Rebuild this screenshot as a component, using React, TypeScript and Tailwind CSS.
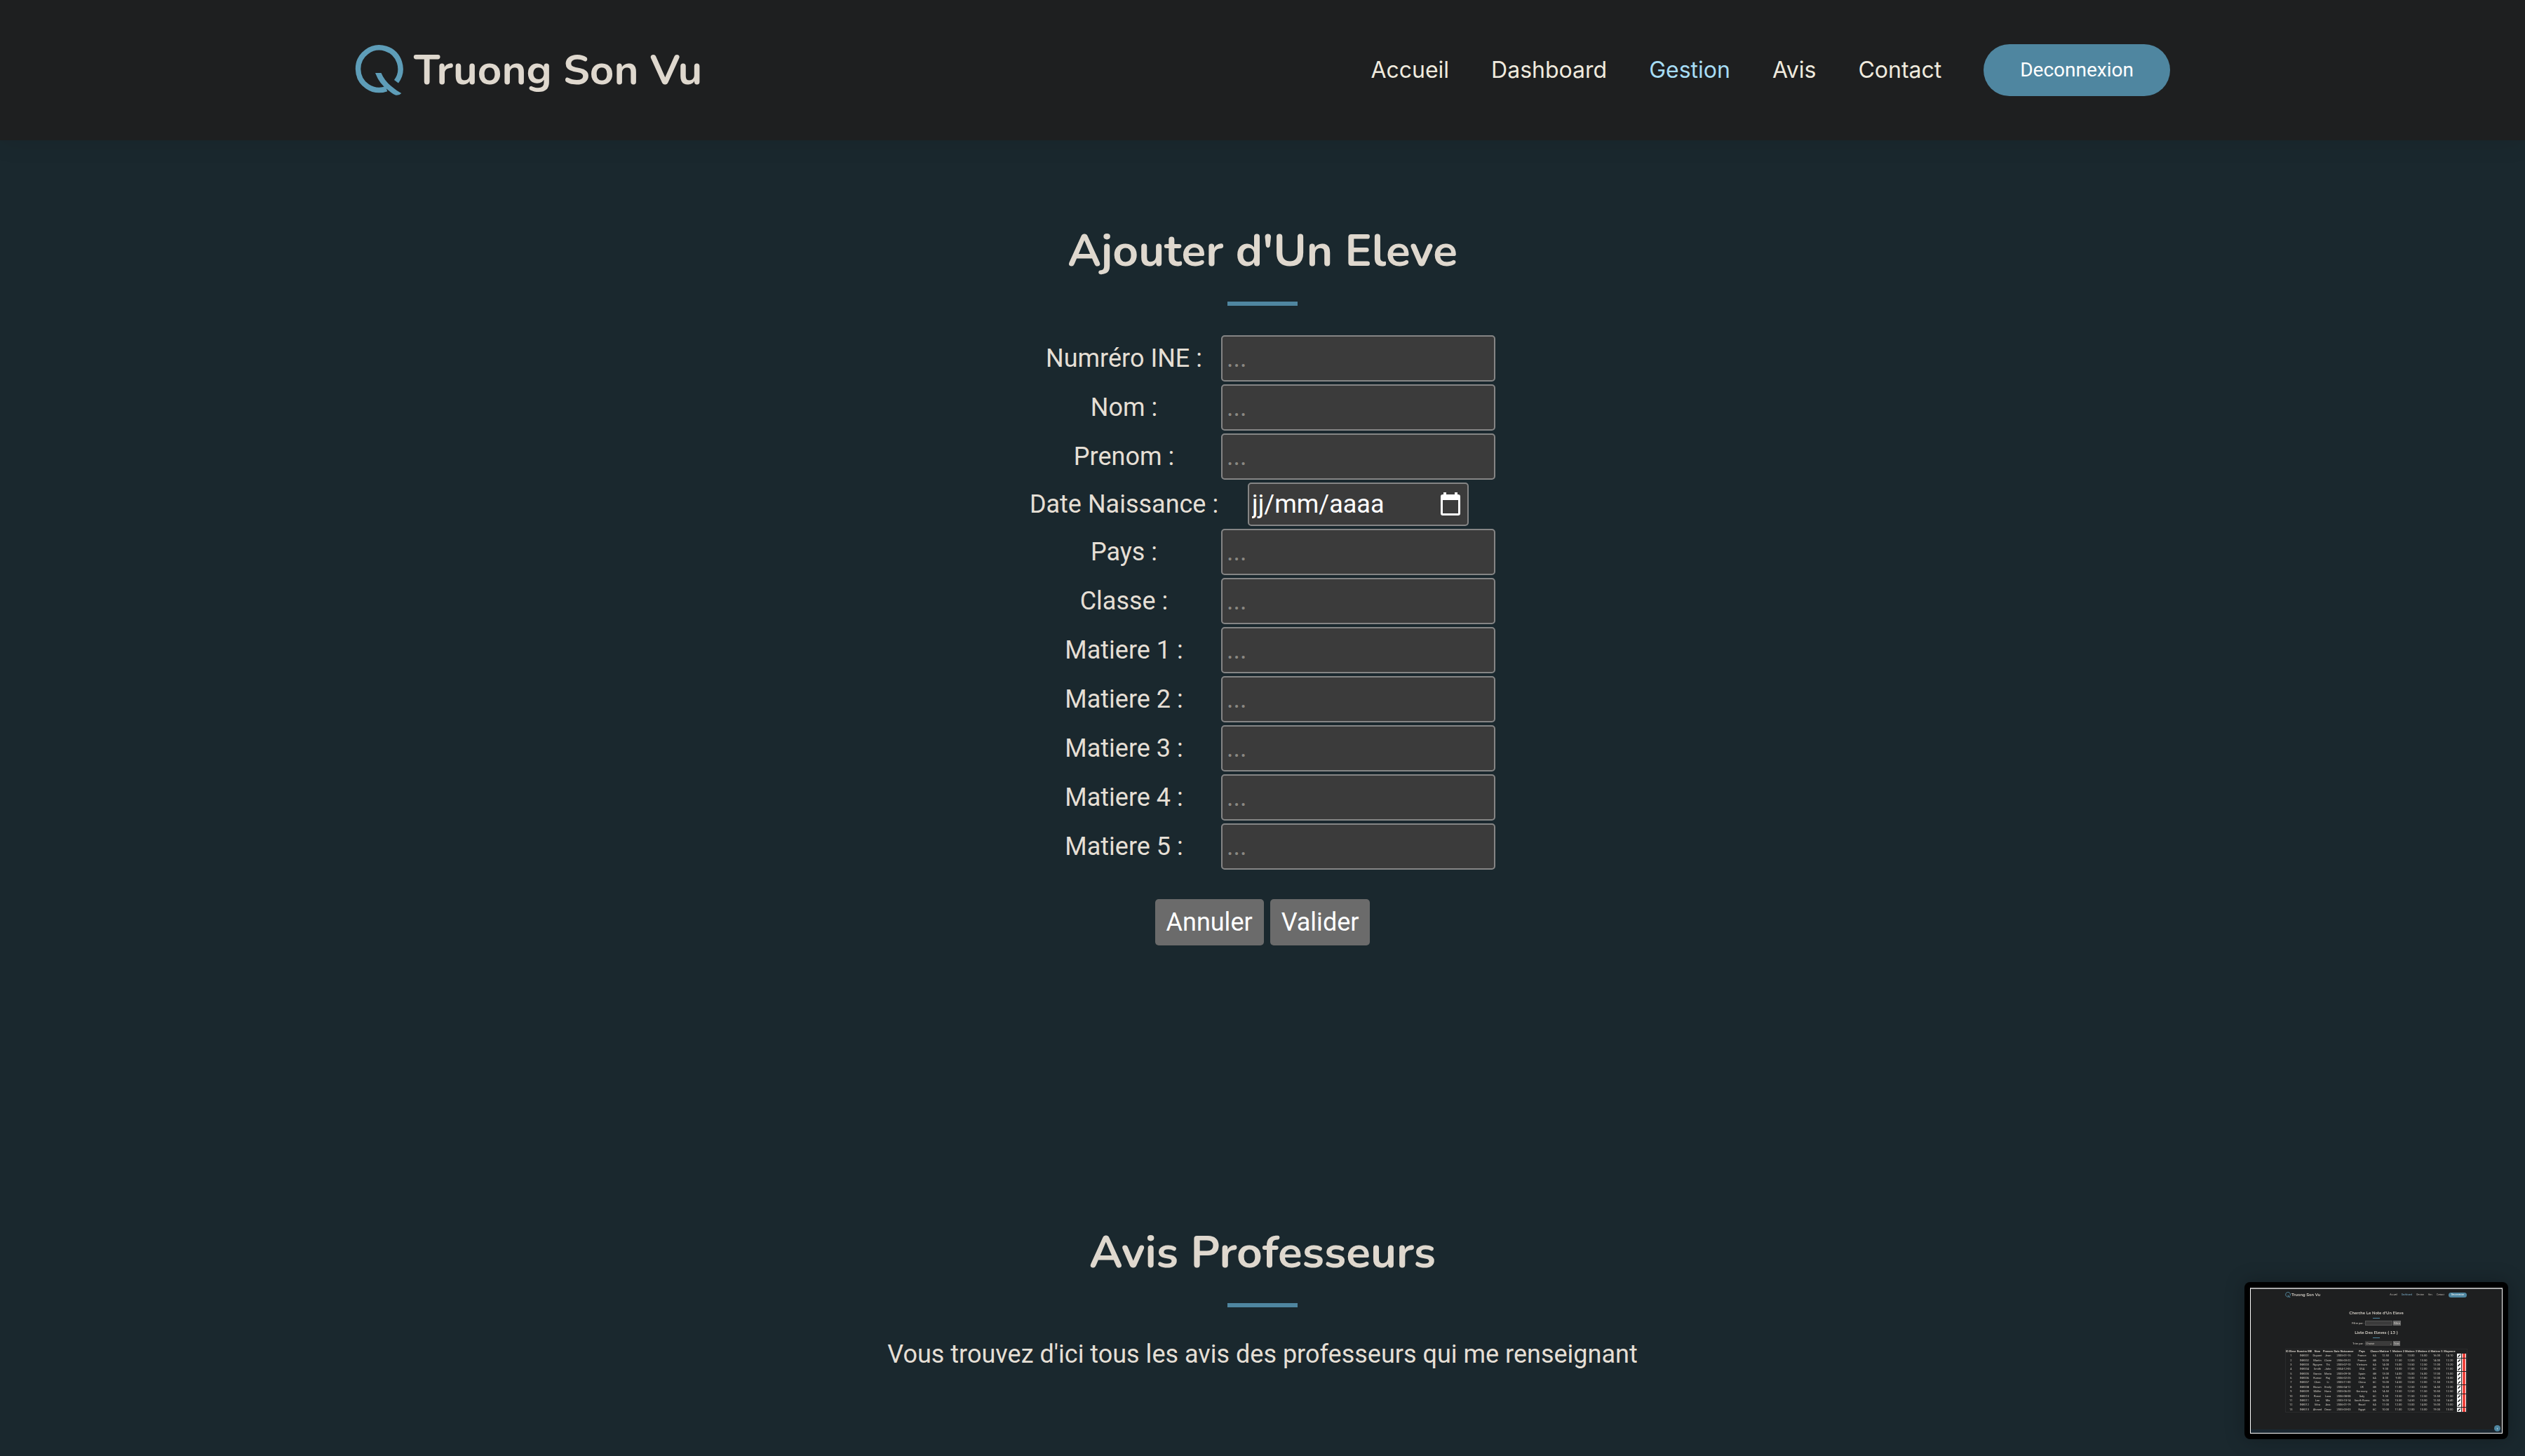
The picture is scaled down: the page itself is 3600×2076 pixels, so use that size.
import { useId } from "react";

const navLinks = ["Accueil", "Dashboard", "Gestion", "Avis", "Contact"];

const fields = [
  "Numréro INE",
  "Nom",
  "Prenom",
  "Date Naissance",
  "Pays",
  "Classe",
  "Matiere 1",
  "Matiere 2",
  "Matiere 3",
  "Matiere 4",
  "Matiere 5",
];

const previewHead = ["ID Eleve", "Numéro INE", "Nom", "Prenom", "Date Naissance", "Pays", "Classe", "Matiere 1", "Matiere 2", "Matiere 3", "Matiere 4", "Matiere 5", "Moyenne"];
const previewCols = [15, 24, 13, 17, 28, 24, 12, 19, 18, 18, 18, 19, 18];

const previewRows = [
  ["1", "INE001", "Dupont", "Jean", "2005-01-15", "France", "6A", "12.50", "14.00", "13.00", "15.00", "16.00", "14.10"],
  ["2", "INE002", "Martin", "Claire", "2006-03-22", "France", "6B", "10.00", "11.50", "12.00", "13.50", "14.00", "12.20"],
  ["3", "INE003", "Nguyen", "Thi", "2005-07-10", "Vietnam", "6A", "14.00", "15.00", "13.50", "12.50", "11.00", "13.20"],
  ["4", "INE004", "Smith", "John", "2004-12-05", "USA", "6C", "9.00", "10.00", "11.00", "12.00", "13.00", "11.00"],
  ["5", "INE005", "Garcia", "Maria", "2005-09-18", "Spain", "6B", "13.00", "14.00", "15.00", "16.00", "17.00", "15.00"],
  ["6", "INE006", "Kumar", "Raj", "2006-02-25", "India", "6A", "8.00", "9.00", "10.00", "11.00", "12.00", "10.00"],
  ["7", "INE007", "Chen", "Li", "2005-11-30", "China", "6C", "15.00", "14.50", "13.50", "12.00", "11.50", "13.30"],
  ["8", "INE008", "Brown", "Emily", "2006-04-12", "UK", "6B", "10.50", "11.00", "12.50", "13.00", "14.50", "12.30"],
  ["9", "INE009", "Müller", "Hans", "2005-06-20", "Germany", "6A", "14.50", "13.50", "12.50", "11.50", "10.50", "12.50"],
  ["10", "INE010", "Rossi", "Luca", "2006-08-08", "Italy", "6C", "9.50", "10.50", "11.50", "12.50", "13.50", "11.50"],
  ["11", "INE011", "Lee", "Min", "2005-10-14", "South Korea", "6B", "16.00", "15.50", "14.50", "13.50", "12.50", "14.40"],
  ["12", "INE012", "Silva", "Ana", "2006-01-19", "Brazil", "6A", "11.00", "12.00", "13.00", "14.00", "15.00", "13.00"],
  ["13", "INE013", "Ahmed", "Omar", "2005-03-03", "Egypt", "6C", "10.00", "11.00", "12.00", "13.00", "19.00", "13.00"],
];

function Logo({ className }: { className: string }) {
  return (
    <svg viewBox="-3 0 72 72" className={className} fill="none" aria-hidden="true">
      <path d="M58 52.200A30.200 30.200 0 1 0 44 62.600" stroke="#5e9db8" strokeWidth="7.500" />
      <path d="M28 40H36.500Q41 51 51 59Q58 65 65.300 69Q62.500 72.300 57.500 71.800Q54 71 47 65Q34 56 28 40Z" fill="#5e9db8" />
    </svg>
  );
}

function SectionTitle({ children }: { children: string }) {
  return (
    <>
      <h2 className="text-center font-[Nunito,Lato,sans-serif] text-[64px] leading-[76px] font-bold text-[#dfd8ce]">{children}</h2>
      <div className="mx-auto mt-[34px] h-[6px] w-[100px] bg-[#4f86a0]" />
    </>
  );
}

function Field({ label }: { label: string }) {
  const id = useId();
  const isDate = label === "Date Naissance";
  return (
    <tr>
      <td className="h-[62px] p-0 text-center">
        <label htmlFor={id}>{label} :</label>
      </td>
      <td className="p-0">
        {isDate ? (
          <div className="mx-auto flex h-[62px] w-[315px] items-center justify-between rounded-[5px] border-2 border-[#858585] bg-[#3b3b3b] pr-2 pl-1">
            <input id={id} type="text" placeholder="jj/mm/aaaa" className="w-[240px] bg-transparent text-white outline-none placeholder:text-white placeholder:opacity-100" />
            <button type="button" aria-label="Choisir une date">
              <svg viewBox="0 0 32 36" className="h-[36px] w-[32px]" aria-hidden="true">
                <path fillRule="evenodd" fill="#fff" d="M6 1h4v3h12V1h4v3h1q3 0 3 3v24q0 3-3 3H5q-3 0-3-3V7q0-3 3-3h1ZM5 12v19h22V12Z" />
              </svg>
            </button>
          </div>
        ) : (
          <input id={id} type="text" placeholder="..." className="block h-[66px] w-[391px] rounded-[5px] border-2 border-[#858585] bg-[#3b3b3b] px-[6px] text-white outline-none placeholder:text-[#8a8882]" />
        )}
      </td>
    </tr>
  );
}

function Preview() {
  return (
    <aside aria-label="Aperçu" className="fixed right-6 bottom-6 rounded-lg bg-black p-2 shadow-[0_0_28px_rgba(0,0,0,0.25)]">
      <div className="flex h-[208px] w-[360px] flex-col border border-t-2 border-white border-t-[#aaa] bg-[#1e1f20] font-[Roboto,sans-serif] text-[#cfcac2]">
        <div className="flex h-[16px] shrink-0 items-center justify-between pr-[50px] pl-[49px]">
          <div className="flex items-center gap-px font-[Nunito,Lato,sans-serif] text-[6px] font-bold">
            <Logo className="h-[8px] w-[8px]" />
            <span>Truong Son Vu</span>
          </div>
          <div className="flex items-center gap-[6px] font-[Inter,sans-serif] text-[3px] leading-[7px]">
            {navLinks.map((link) => (
              <span key={link} className={link === "Dashboard" ? "text-[#7fb4d0]" : ""}>{link}</span>
            ))}
            <span className="flex h-[7px] w-[26px] items-center justify-center rounded-full bg-[#4f86a0] text-white">Deconnexion</span>
          </div>
        </div>
        <div className="mt-[13px] flex flex-col items-center text-[4px] leading-[7px]">
          <div className="font-[Nunito,Lato,sans-serif] text-[6px] leading-[10px] font-bold">Cherche Le Note d'Un Eleve</div>
          <div className="mt-[2px] h-px w-[10px] bg-[#4f86a0]" />
          <div className="mt-[3px] flex items-center gap-px">
            <span>Filtre par :</span>
            <span className="h-[7px] w-[39px] border border-[#555] bg-[#3b3b3b]" />
            <span className="h-[7px] w-[11px] bg-[#6b6b6b] text-center">Filtre</span>
          </div>
          <div className="mt-[5px] font-[Nunito,Lato,sans-serif] text-[6px] leading-[10px] font-bold">Liste Des Eleves ( 13 )</div>
          <div className="mt-[2px] h-px w-[10px] bg-[#4f86a0]" />
          <div className="mt-1 flex items-center gap-px">
            <span>Trier par :</span>
            <span className="flex h-[7px] w-[39px] items-center justify-between bg-[#3b3b3b] px-px"><span>Choisir</span><span>⌄</span></span>
            <span className="h-[7px] w-[10px] bg-[#6b6b6b] text-center">Trier</span>
          </div>
        </div>
        <div className="mt-1 flex justify-center">
          <table className="h-[91px] w-[260px] table-fixed border-collapse border border-[#2a2b2c] text-center text-[4px] leading-[6px]">
            <colgroup>
              {previewCols.map((w, i) => (
                <col key={i} style={{ width: w }} />
              ))}
              <col />
            </colgroup>
            <thead>
              <tr>
                {previewHead.map((h) => (
                  <th key={h} className="p-0 whitespace-nowrap">{h}</th>
                ))}
                <th className="p-0" />
              </tr>
            </thead>
            <tbody>
              {previewRows.map((row) => (
                <tr key={row[0]}>
                  {row.map((cell, i) => (
                    <td key={i} className="p-0 whitespace-nowrap">{cell}</td>
                  ))}
                  <td className="p-0">
                    <svg viewBox="0 0 13 6" className="mx-auto block h-[6px] w-[13px]" aria-hidden="true">
                      <path d="M0 0H6V6H0Z" fill="#fff" />
                      <path d="M1.500 4.700L4.700 1.500" stroke="#111" strokeWidth="1.300" />
                      <path d="M7 0H13V6H7Z" fill="#fff" />
                      <path d="M8 0H12V6H8Z" fill="#f0443e" />
                    </svg>
                  </td>
                </tr>
              ))}
            </tbody>
          </table>
        </div>
        <div className="mt-auto flex h-[5px] items-end justify-end bg-[#1a2730] pr-[2px] pb-[2px]">
          <span className="flex h-[9px] w-[9px] shrink-0 items-center justify-center rounded-full bg-[#4f86a0] text-[5px] text-white">↑</span>
        </div>
      </div>
    </aside>
  );
}

export default function App() {
  return (
    <div className="min-h-screen bg-[#1a282e] font-[Roboto,sans-serif] text-[36px] leading-[54px] text-[#e5dfd5]">
      <header className="bg-[#1e1f20] shadow-[0_0_36px_rgba(0,0,0,0.1)]">
        <div className="mx-auto flex h-[200px] max-w-[2592px] items-center justify-between pr-[2px]">
          <a href="#accueil" className="flex items-center gap-[14px]">
            <Logo className="h-[72px] w-[72px]" />
            <span className="font-[Nunito,Lato,sans-serif] text-[60px] leading-[72px] font-bold text-[#dfd8ce]">Truong Son Vu</span>
          </a>
          <div className="flex items-center gap-[60px] font-[Inter,sans-serif] text-[32px] leading-[48px]">
            <nav className="flex gap-[60px]">
              {navLinks.map((link) => (
                <a key={link} href={"#" + link.toLowerCase()} className={link === "Gestion" ? "text-[#a6dcf4]" : "text-[#efeade]"}>
                  {link}
                </a>
              ))}
            </nav>
            <button type="button" className="h-[74px] rounded-full bg-[#4f86a0] px-[52px] font-[Roboto,sans-serif] text-[28px] text-white">Deconnexion</button>
          </div>
        </div>
      </header>
      <main>
        <section className="pt-[120px]">
          <SectionTitle>Ajouter d'Un Eleve</SectionTitle>
          <form className="mt-[38px] flex flex-col items-center">
            <table className="border-separate border-spacing-1">
              <tbody>
                {fields.map((f) => (
                  <Field key={f} label={f} />
                ))}
              </tbody>
            </table>
            <div className="mt-[38px] flex gap-[9px] text-white">
              <button type="reset" className="h-[66px] rounded-[5px] bg-[#6b6b6b] px-4">Annuler</button>
              <button type="button" className="h-[66px] rounded-[5px] bg-[#6b6b6b] px-4">Valider</button>
            </div>
          </form>
        </section>
        <section className="pt-[400px]">
          <SectionTitle>Avis Professeurs</SectionTitle>
          <p className="mt-10 text-center">Vous trouvez d'ici tous les avis des professeurs qui me renseignant</p>
        </section>
      </main>
      <Preview />
    </div>
  );
}
